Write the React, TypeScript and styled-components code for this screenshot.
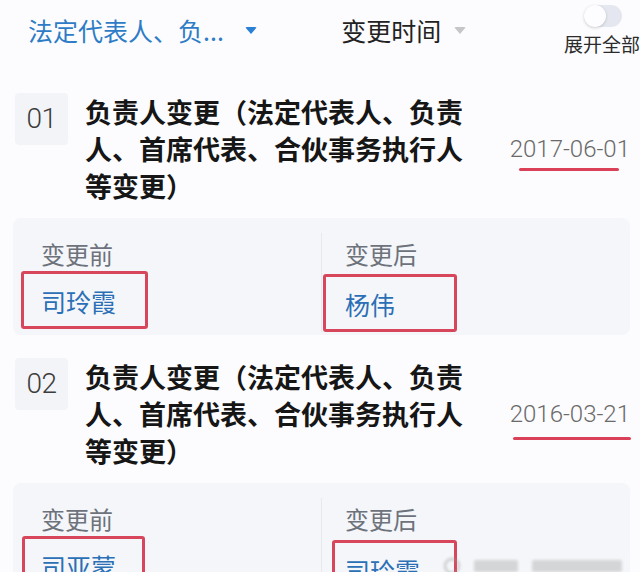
import React from "react";
import styled, { createGlobalStyle } from "styled-components";

const GlobalStyle = createGlobalStyle`
  html, body {
    margin: 0;
    padding: 0;
    background: #fcfcfe;
    overflow: hidden;
  }
  body {
    font-family: "Noto Sans CJK SC", "Noto Sans", sans-serif;
    color: #1c1c1c;
  }
`;

const Page = styled.div`
  width: 640px;
  height: 572px;
  overflow: hidden;
  position: relative;
  background: #fcfcfe;
`;

const Header = styled.div`
  display: flex;
  align-items: flex-start;
  height: 93px;
`;

const Filter = styled.div<{ $w: number; $pl: number; $active?: boolean }>`
  width: ${(p) => p.$w}px;
  padding-left: ${(p) => p.$pl}px;
  padding-top: 12px;
  box-sizing: border-box;
  display: flex;
  align-items: center;
  font-size: 25px;
  line-height: 36px;
  color: ${(p) => (p.$active ? "#2f7cc6" : "#222")};
  white-space: nowrap;
`;

const Caret = styled.span<{ $color: string; $gap: number }>`
  display: inline-block;
  margin-left: ${(p) => p.$gap}px;
  width: 0;
  height: 0;
  border-left: 6px solid transparent;
  border-right: 6px solid transparent;
  border-top: 7px solid ${(p) => p.$color};
  border-radius: 2px;
`;

const ToggleCol = styled.div`
  display: flex;
  flex-direction: column;
  padding-left: 2px;
  white-space: nowrap;
`;

const Track = styled.div`
  margin-left: 20px;
  margin-top: 5px;
  width: 38px;
  height: 22px;
  border-radius: 11px;
  background: #e4e7ef;
  position: relative;
`;

const Knob = styled.div`
  position: absolute;
  left: 0;
  top: 0;
  width: 22px;
  height: 22px;
  border-radius: 50%;
  background: #fdfdff;
  box-shadow: 0 1px 3px rgba(0, 0, 0, 0.18);
`;

const ToggleLabel = styled.div`
  font-size: 19px;
  line-height: 26px;
  margin-top: 4px;
  color: #2b2b2b;
`;

const List = styled.div`
  display: flex;
  flex-direction: column;
  padding: 0 10px 0 13px;
`;

const Item = styled.div<{ $mt: number }>`
  margin-top: ${(p) => p.$mt}px;
`;

const Row = styled.div`
  display: flex;
  align-items: flex-start;
`;

const Badge = styled.div`
  margin-left: 2px;
  width: 53px;
  height: 52px;
  border-radius: 4px;
  background: #f3f4f7;
  display: flex;
  align-items: center;
  justify-content: center;
  font-family: Roboto, "Liberation Sans", sans-serif;
  font-weight: 300;
  font-size: 28px;
  letter-spacing: -0.5px;
  color: #3c3c3c;
  padding-bottom: 2px;
  box-sizing: border-box;
`;

const Title = styled.div`
  margin-left: 17px;
  width: 392px;
  font-size: 27px;
  font-weight: 700;
  line-height: 37px;
  color: #161616;
`;

const DateBox = styled.div`
  margin-left: auto;
  align-self: center;
  position: relative;
  font-family: Roboto, "Liberation Sans", sans-serif;
  font-weight: 300;
  font-size: 24px;
  line-height: 28px;
  color: #6a6a6a;
  white-space: nowrap;
`;

const Underline = styled.span<{ $left: number; $w: number; $top: number }>`
  position: absolute;
  left: ${(p) => p.$left}px;
  top: ${(p) => p.$top}px;
  width: ${(p) => p.$w}px;
  height: 3px;
  border-radius: 2px;
  background: #da4159;
`;

const Card = styled.div`
  margin-top: 14px;
  height: 117px;
  border-radius: 8px;
  background: #f4f6f9;
  display: grid;
  grid-template-columns: 308px 1fr;
`;

const Col = styled.div<{ $divider?: boolean; $pl: number }>`
  margin: 15px 0 6px;
  padding: 7px 0 0 ${(p) => p.$pl}px;
  display: flex;
  flex-direction: column;
  align-items: flex-start;
  border-left: ${(p) => (p.$divider ? "1px solid #e7e9ee" : "none")};
`;

const Label = styled.div`
  font-size: 24px;
  line-height: 28px;
  color: #6d727b;
`;

const NameBox = styled.div<{ $shift: number; $w: number; $top: number }>`
  margin-top: ${(p) => p.$top}px;
  margin-left: ${(p) => -p.$shift}px;
  padding: 12px 0 10px ${(p) => p.$shift - 3}px;
  width: ${(p) => p.$w}px;
  box-sizing: border-box;
  border: 3px solid #d7465b;
  border-radius: 3px;
  font-size: 25px;
  line-height: 30px;
  color: #2b6fb6;
  white-space: nowrap;
`;

const Watermark = styled.div`
  position: absolute;
  left: 444px;
  top: 558px;
  display: flex;
  align-items: center;
  gap: 14px;
  filter: blur(1.5px);
  opacity: 0.55;
`;

const WmDot = styled.span`
  width: 12px;
  height: 12px;
  border-radius: 50%;
  border: 2px solid #999;
`;

const WmBar = styled.span<{ $w: number }>`
  width: ${(p) => p.$w}px;
  height: 12px;
  background: #bbb;
  border-radius: 2px;
`;

type Entry = {
  no: string;
  title: string;
  date: string;
  line: { left: number; w: number; top: number };
  before: { name: string; shift: number; w: number; top: number };
  after: { name: string; shift: number; w: number; top: number };
  mt: number;
};

const entries: Entry[] = [
  {
    no: "01",
    title: "负责人变更（法定代表人、负责人、首席代表、合伙事务执行人等变更）",
    date: "2017-06-01",
    line: { left: 9, w: 100, top: 33 },
    before: { name: "司玲霞", shift: 20, w: 127, top: 3 },
    after: { name: "杨伟", shift: 22, w: 134, top: 6 },
    mt: 0,
  },
  {
    no: "02",
    title: "负责人变更（法定代表人、负责人、首席代表、合伙事务执行人等变更）",
    date: "2016-03-21",
    line: { left: 3, w: 118, top: 37 },
    before: { name: "司亚蒙", shift: 19, w: 123, top: 3 },
    after: { name: "司玲霞", shift: 13, w: 125, top: 7 },
    mt: 23,
  },
];

export default function App() {
  return (
    <Page>
      <GlobalStyle />
      <Header>
        <Filter $w={343} $pl={28} $active>
          法定代表人、负...
          <Caret $color="#2a7fd6" $gap={21} />
        </Filter>
        <Filter $w={222} $pl={0}>
          变更时间
          <Caret $color="#c6c6c8" $gap={13} />
        </Filter>
        <ToggleCol>
          <Track>
            <Knob />
          </Track>
          <ToggleLabel>展开全部</ToggleLabel>
        </ToggleCol>
      </Header>
      <List>
        {entries.map((e) => (
          <Item key={e.no} $mt={e.mt}>
            <Row>
              <Badge>{e.no}</Badge>
              <Title>{e.title}</Title>
              <DateBox>
                {e.date}
                <Underline $left={e.line.left} $w={e.line.w} $top={e.line.top} />
              </DateBox>
            </Row>
            <Card>
              <Col $pl={28}>
                <Label>变更前</Label>
                <NameBox $shift={e.before.shift} $w={e.before.w} $top={e.before.top}>
                  {e.before.name}
                </NameBox>
              </Col>
              <Col $pl={23} $divider>
                <Label>变更后</Label>
                <NameBox $shift={e.after.shift} $w={e.after.w} $top={e.after.top}>
                  {e.after.name}
                </NameBox>
              </Col>
            </Card>
          </Item>
        ))}
      </List>
      <Watermark>
        <WmDot />
        <WmBar $w={44} />
        <WmBar $w={90} />
      </Watermark>
    </Page>
  );
}
